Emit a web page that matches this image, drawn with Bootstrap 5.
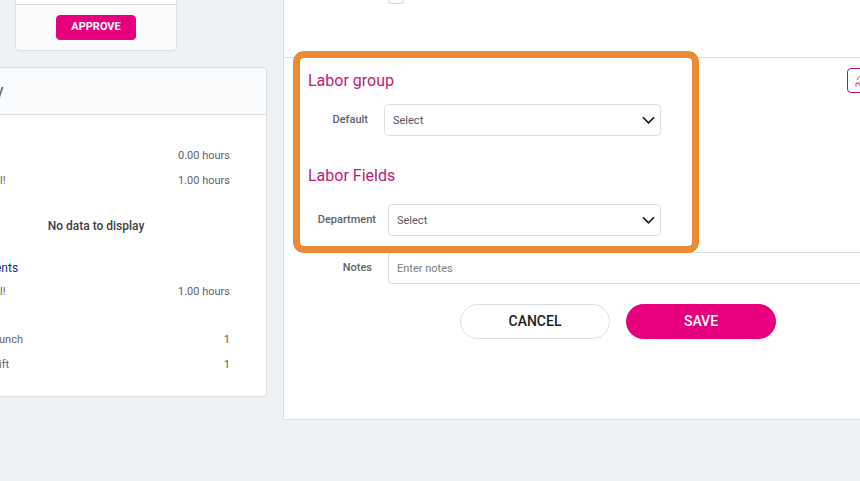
<!DOCTYPE html>
<html lang="en">
<head>
<meta charset="utf-8">
<meta name="viewport" content="width=device-width, initial-scale=1">
<title>Timesheet entry</title>
<link href="https://cdn.jsdelivr.net/npm/bootstrap@5.3.0/dist/css/bootstrap.min.css" rel="stylesheet">
<style>
:root { --pink: #e6007e; --line: #dcdee0; --panel: #fafbfd; }
body { font-family: Roboto, "Liberation Sans", sans-serif; font-size: 11px; line-height: 16px; color: #606366; background: #eef2f5; overflow: hidden; }
.side { width: 267px; }
.approve-box { width: 162px; margin-left: 15px; border: 1px solid var(--line); border-top: 0; border-radius: 0 0 4px 4px; background: var(--panel); }
.approve-top { height: 5px; background: #fff; border-bottom: 1px solid var(--line); }
.approve-foot { padding: 10px 0; }
.btn-approve { width: 80px; height: 25px; padding: 0; font-size: 11px; font-weight: 700; border-radius: 4px; }
.btn-pink, .btn-pink:hover { background: var(--pink); border-color: var(--pink); color: #fff; }
.summary { border: 1px solid var(--line); border-left: 0; border-radius: 0 4px 4px 0; background: #fff; padding-bottom: 19px; }
.summary-head { height: 47px; margin-left: -5px; background: var(--panel); border-bottom: 1px solid var(--line); font-size: 18px; border-radius: 0 4px 0 0; }
.line-item { height: 25px; padding-right: 36px; }
.empty-note { height: 24px; margin: 21px 0 19px; padding-right: 74px; font-size: 12px; font-weight: 500; color: #3c3f43; }
.group-link { margin-left: -5px; font-size: 12px; color: #1d2f7c; height: 22px; }
.punches { padding-top: 23px; }
.punches .line-item { margin-left: -1px; }
.main-panel { border: 1px solid var(--line); border-width: 0 0 1px 1px; background: #fff; min-width: 0; padding-bottom: 80px; }
.top-strip { height: 58px; border-bottom: 1px solid var(--line); padding-left: 104px; }
.top-strip .form-check-input { width: 16px; height: 16px; margin-top: -12px; border-color: #d0d2d5; }
.callout-frame { position: absolute; left: 9px; top: 51px; width: 406px; height: 202px; border: 7px solid #ec8b36; border-radius: 11px; pointer-events: none; z-index: 2; }
.entry-form { padding-top: 10px; }
.section-title { font-size: 16px; line-height: 24px; font-weight: 400; color: #bd1a78; padding-left: 24px; margin: 0; }
.btn-refresh { width: 34px; height: 25px; margin-right: -21px; border: 1px solid #a3156f; border-radius: 4px; background: #fff; color: #d8506f; padding: 0 0 0 7px; }
.field-label { font-weight: 500; text-align: right; }
.label-a { width: 84px; margin-right: 16px; }
.label-b { width: 92px; margin-right: 12px; }
.label-c { width: 88px; margin-right: 16px; }
.row-a { margin-top: 11px; }
.form-select.pick, .form-control.note { height: 32px; font-size: 11px; line-height: 16px; border: 1px solid #dcdee0; border-radius: 4px; color: #55585c; padding: 7px 8px; }
.form-select.pick { padding: 8px 8px 6px; background-image: url("data:image/svg+xml,%3Csvg xmlns='http://www.w3.org/2000/svg' viewBox='0 0 14 8'%3E%3Cpath d='M1 1l6 6 6-6' fill='none' stroke='%23151515' stroke-width='1.7'/%3E%3C/svg%3E"); background-size: 13px 8px; background-position: right 5px center; }
.pick-a { width: 277px; }
.pick-b { width: 273px; }
.note::placeholder { color: #7b7e82; }
.actions { margin-top: 20px; padding-left: 176px; }
.btn-wide { width: 150px; height: 35px; padding: 0; border-radius: 18px; font-size: 14px; font-weight: 500; }
.btn-cancel { border: 1px solid var(--line); background: #fff; color: #1e1e1e; }
</style>
</head>
<body>
<div class="d-flex align-items-start gap-3">
  <aside class="side flex-shrink-0">
    <div class="approve-box">
      <div class="approve-top"></div>
      <div class="approve-foot d-flex justify-content-center"><button type="button" class="btn btn-pink btn-approve">APPROVE</button></div>
    </div>
    <section class="summary mt-3">
      <div class="summary-head d-flex align-items-center mb-4"><span>y</span></div>
      <div class="pt-1">
        <div class="line-item d-flex align-items-center justify-content-between"><span></span><span>0.00 hours</span></div>
        <div class="line-item d-flex align-items-center justify-content-between"><span>l!</span><span>1.00 hours</span></div>
      </div>
      <div class="empty-note d-flex align-items-center justify-content-center"><span>No data to display</span></div>
      <div class="group-link d-flex align-items-center"><span>ents</span></div>
      <div class="line-item d-flex align-items-center justify-content-between"><span>l!</span><span>1.00 hours</span></div>
      <div class="punches">
        <div class="line-item d-flex align-items-center justify-content-between"><span>unch</span><span>1</span></div>
        <div class="line-item d-flex align-items-center justify-content-between"><span>ift</span><span>1</span></div>
      </div>
    </section>
  </aside>
  <main class="main-panel flex-grow-1 position-relative">
    <div class="callout-frame"></div>
    <div class="top-strip d-flex align-items-start"><input class="form-check-input" type="checkbox" aria-label="Option"></div>
    <form class="entry-form">
      <div class="d-flex align-items-center justify-content-between">
        <h2 class="section-title">Labor group</h2>
        <button type="button" class="btn-refresh d-flex align-items-center" aria-label="Refresh">
          <svg width="14" height="14" viewBox="0 0 14 14" fill="none" stroke="currentColor"><path d="M2 6a5 5 0 0 1 9-2l1 1M12 1v4H8M12 8a5 5 0 0 1-9 2L2 9M1 13V9h5"/></svg>
        </button>
      </div>
      <div class="row-a d-flex align-items-center">
        <label class="field-label label-a" for="grp">Default</label>
        <select id="grp" class="form-select pick pick-a"><option>Select</option></select>
      </div>
      <h2 class="section-title mt-4 pt-1">Labor Fields</h2>
      <div class="d-flex align-items-center mt-3">
        <label class="field-label label-b" for="dept">Department</label>
        <select id="dept" class="form-select pick pick-b"><option>Select</option></select>
      </div>
      <div class="d-flex align-items-center mt-3">
        <label class="field-label label-c flex-shrink-0" for="notes">Notes</label>
        <input id="notes" type="text" class="form-control note rounded-end-0 border-end-0" placeholder="Enter notes">
      </div>
      <div class="actions d-flex gap-3">
        <button type="button" class="btn btn-wide btn-cancel">CANCEL</button>
        <button type="submit" class="btn btn-wide btn-pink">SAVE</button>
      </div>
    </form>
  </main>
</div>
<script src="https://cdn.jsdelivr.net/npm/bootstrap@5.3.0/dist/js/bootstrap.bundle.min.js"></script>
</body>
</html>
